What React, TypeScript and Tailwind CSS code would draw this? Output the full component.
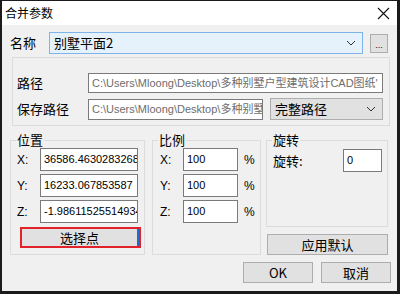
import React from "react";

const latin = "font-['Liberation_Sans','Noto_Sans_CJK_SC',sans-serif]";
const cjk = "font-['Noto_Sans_CJK_SC','Liberation_Sans',sans-serif]";

function Chevron() {
  return (
    <svg width="10" height="6" viewBox="0 0 10 6" className="shrink-0">
      <polyline points="1,1 5,5 9,1" fill="none" stroke="#333" strokeWidth="1" />
    </svg>
  );
}

function GroupBox({ title, className, children }: { title: string; className: string; children?: React.ReactNode }) {
  return (
    <div className={`relative border border-[#dcdcdc] ${className}`}>
      <span className={`absolute -top-[9px] left-[5px] bg-[#f0f0f0] px-px text-[13px] leading-[16px] text-black ${cjk}`}>
        {title}
      </span>
      {children}
    </div>
  );
}

function Field({ value, w }: { value: string; w: string }) {
  return (
    <div
      className={`${w} h-[23px] bg-white border border-[#7a7a7a] flex items-center px-[3px] overflow-hidden whitespace-nowrap text-[11px] text-black ${latin}`}
    >
      <span className="shrink-0">{value}</span>
    </div>
  );
}

function Btn({ label, w }: { label: string; w: string }) {
  return (
    <div className={`${w} h-[21px] bg-[#e1e1e1] border border-[#adadad] flex items-center justify-center text-[13px] text-black ${cjk}`}>
      {label}
    </div>
  );
}

export default function App() {
  const pos = [
    { k: "X:", v: "36586.4630283268" },
    { k: "Y:", v: "16233.067853587" },
    { k: "Z:", v: "-1.98611525514934" },
  ];
  return (
    <div className="w-[400px] h-[294px] flex flex-col bg-[#f0f0f0] border-t border-l-2 border-r-[3px] border-b-[3px] border-[#1b1b1b] overflow-hidden">
      {/* title bar */}
      <div className="h-[24px] bg-white flex items-center justify-between pl-[3px] pr-[7px]">
        <span className={`text-[12px] text-black ${cjk}`}>合并参数</span>
        <svg width="13" height="13" viewBox="0 0 13 13">
          <path d="M1 1 L12 12 M12 1 L1 12" stroke="#111" strokeWidth="1.1" />
        </svg>
      </div>

      {/* name row */}
      <div className="mt-[7px] ml-[8px] flex items-center">
        <span className={`w-[39px] text-[13px] leading-[16px] text-black ${cjk}`}>名称</span>
        <div className="w-[314px] h-[22px] bg-[#e5f1fb] border border-[#7eb4ea] flex items-center justify-between pl-[4px] pr-[6px]">
          <span className={`text-[13px] text-black ${cjk}`}>别墅平面2</span>
          <Chevron />
        </div>
        <div className="ml-[7px] w-[18px] h-[19px] bg-[#e1e1e1] border border-[#adadad] flex items-end justify-center pb-[3px]">
          <span className={`text-[9px] leading-[8px] text-black ${latin}`}>...</span>
        </div>
      </div>

      {/* path panel */}
      <div className="mt-[3px] ml-[10px] w-[378px] h-[69px] border border-[#dcdcdc] pt-[15px] pl-[4px] flex flex-col gap-[5px]">
        <div className="flex items-center">
          <span className={`w-[71px] text-[13px] leading-[16px] text-black ${cjk}`}>路径</span>
          <div className={`w-[295px] h-[20px] bg-white border border-[#7a7a7a] flex items-center px-[3px] overflow-hidden whitespace-nowrap text-[11px] text-[#6d6d6d] ${latin}`}>
            C:\Users\Mloong\Desktop\多种别墅户型建筑设计CAD图纸'
          </div>
        </div>
        <div className="flex items-center">
          <span className={`w-[71px] text-[13px] leading-[16px] text-black ${cjk}`}>保存路径</span>
          <div className={`w-[175px] h-[21px] bg-white border border-[#7a7a7a] flex items-center px-[3px] overflow-hidden whitespace-nowrap text-[11px] text-[#6d6d6d] ${latin}`}>
            C:\Users\Mloong\Desktop\多种别墅
          </div>
          <div className="ml-[7px] w-[113px] h-[22px] bg-[#e1e1e1] border border-[#adadad] flex items-center justify-between pl-[4px] pr-[6px]">
            <span className={`text-[13px] text-black ${cjk}`}>完整路径</span>
            <Chevron />
          </div>
        </div>
      </div>

      {/* groups */}
      <div className="mt-[14px] ml-[8px] flex items-start">
        <GroupBox title="位置" className="w-[135px] h-[115px] pt-[7px] pl-[6px]">
          <div className="flex flex-col gap-[3px]">
            {pos.map(p => (
              <div key={p.k} className="flex items-center">
                <span className={`w-[23px] text-[12px] text-black ${latin}`}>{p.k}</span>
                <Field value={p.v} w="w-[98px]" />
              </div>
            ))}
          </div>
          <div className="mt-[4px] ml-[3px] w-[121px] h-[21px] border-2 border-[#e3232c] flex">
            <div className={`flex-1 bg-[#e1e1e1] border-r-2 border-[#1f6fd0] flex items-center justify-center text-[13px] leading-[16px] text-black ${cjk}`}>
              选择点
            </div>
          </div>
        </GroupBox>

        <GroupBox title="比例" className="ml-[7px] w-[109px] h-[115px] pt-[7px] pl-[7px]">
          <div className="flex flex-col gap-[3px]">
            {["X:", "Y:", "Z:"].map(k => (
              <div key={k} className="flex items-center">
                <span className={`w-[23px] text-[12px] text-black ${latin}`}>{k}</span>
                <Field value="100" w="w-[55px]" />
                <span className={`ml-[6px] text-[12px] text-black ${latin}`}>%</span>
              </div>
            ))}
          </div>
        </GroupBox>

        <div className="ml-[5px] w-[122px] flex flex-col">
          <GroupBox title="旋转" className="w-[122px] h-[87px] pt-[8px] pl-[6px]">
            <div className="flex items-center">
              <span className={`w-[70px] text-[13px] leading-[16px] text-black ${cjk}`}>旋转:</span>
              <Field value="0" w="w-[39px]" />
            </div>
          </GroupBox>
          <div className="mt-[7px] ml-px">
            <Btn label="应用默认" w="w-[121px]" />
          </div>
        </div>
      </div>

      {/* bottom buttons */}
      <div className="mt-[7px] flex justify-end gap-[8px] pr-[6px]">
        <Btn label="OK" w="w-[70px]" />
        <Btn label="取消" w="w-[70px]" />
      </div>
    </div>
  );
}
